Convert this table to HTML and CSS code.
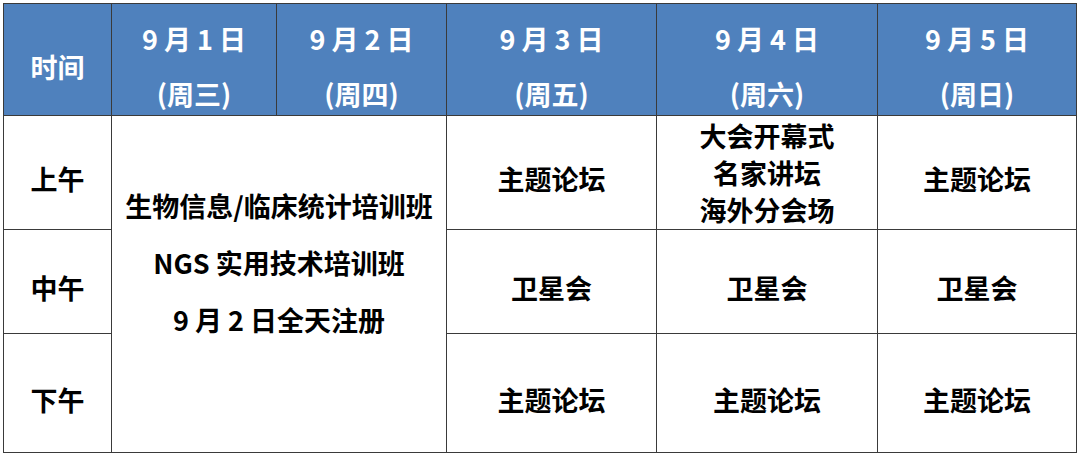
FILE: index.html
```html
<!DOCTYPE html>
<html lang="zh">
<head>
<meta charset="utf-8">
<link rel="stylesheet" href="styles.css">
</head>
<body>
<div class="wrap">
<table class="sched">
  <colgroup>
    <col class="c0"><col class="c1"><col class="c2"><col class="c3"><col class="c4"><col class="c5">
  </colgroup>
  <thead>
    <tr class="rh">
      <th class="time"><span class="one">时间</span></th>
      <th><div class="d">9 月 1 日</div><div class="w">(周三)</div></th>
      <th><div class="d">9 月 2 日</div><div class="w">(周四)</div></th>
      <th><div class="d">9 月 3 日</div><div class="w">(周五)</div></th>
      <th><div class="d">9 月 4 日</div><div class="w">(周六)</div></th>
      <th><div class="d">9 月 5 日</div><div class="w">(周日)</div></th>
    </tr>
  </thead>
  <tbody>
    <tr class="r1">
      <td class="lbl">上午</td>
      <td class="merge" colspan="2" rowspan="3">
        <div class="ml">生物信息/临床统计培训班</div>
        <div class="ml">NGS 实用技术培训班</div>
        <div class="ml">9 月 2 日全天注册</div>
      </td>
      <td class="cell">主题论坛</td>
      <td class="multi"><div>大会开幕式</div><div>名家讲坛</div><div>海外分会场</div></td>
      <td class="cell">主题论坛</td>
    </tr>
    <tr class="r2">
      <td class="lbl">中午</td>
      <td class="cell">卫星会</td>
      <td class="cell">卫星会</td>
      <td class="cell">卫星会</td>
    </tr>
    <tr class="r3">
      <td class="lbl">下午</td>
      <td class="cell">主题论坛</td>
      <td class="cell">主题论坛</td>
      <td class="cell">主题论坛</td>
    </tr>
  </tbody>
</table>
</div>
</body>
</html>
```

FILE: styles.css
```css
html, body {
  margin: 0;
  padding: 0;
  background: #ffffff;
}
.wrap {
  padding: 3px 4px 0 3px;
}
.sched {
  border-collapse: collapse;
  table-layout: fixed;
  width: 1073px;
  font-family: "Noto Sans CJK SC", "Noto Sans", sans-serif;
  font-weight: 700;
  font-size: 27px;
  color: #000;
}
.c0 { width: 108px; }
.c1 { width: 165px; }
.c2 { width: 170px; }
.c3 { width: 210px; }
.c4 { width: 221px; }
.c5 { width: 199px; }

.sched th, .sched td {
  border: 1px solid #3a3a3a;
  padding: 0;
  text-align: center;
  vertical-align: middle;
  line-height: 1;
}
.sched thead th {
  background: #4f81bd;
  color: #fff;
  font-weight: 700;
}
.sched { border: 1.5px solid #6e6e6e; }
.rh { height: 112px; }
.rh th { padding-top: 14px; }
.d { height: 40px; line-height: 40px; }
.w { height: 40px; line-height: 40px; margin-top: 15px; }
.r1 { height: 114px; }
.r2 { height: 104px; }
.r3 { height: 119px; }
.lbl, .cell { padding-top: 12px !important; }
.multi div { line-height: 37px; }
.merge { padding-bottom: 42px !important; }
.ml { line-height: 30px; margin: 0 0 27px; }
.ml:last-child { margin-bottom: 0; }
```
